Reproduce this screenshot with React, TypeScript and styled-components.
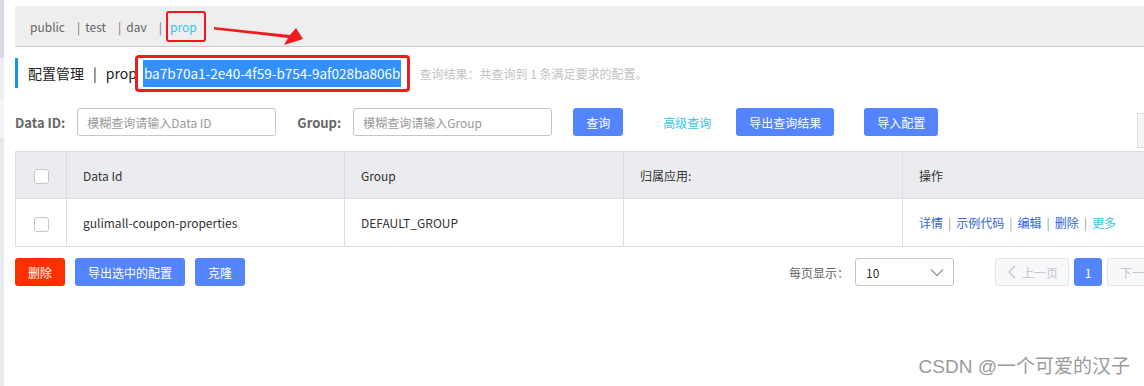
import { FC } from 'react';
import styled, { createGlobalStyle } from 'styled-components';

const GlobalStyle = createGlobalStyle`
  html, body {
    margin: 0;
    padding: 0;
    background: #fff;
    overflow: hidden;
  }
  body {
    font-family: "Noto Sans CJK SC", "Noto Sans", sans-serif;
    font-size: 12px;
    color: #333;
  }
`;

const Page = styled.div`
  position: relative;
  display: flex;
  width: 1144px;
  height: 386px;
  overflow: hidden;
`;

const Sidebar = styled.div`
  flex: none;
  width: 4px;
  display: flex;
  flex-direction: column;
`;

const SideBlock = styled.div<{ $tone: string; $h?: number }>`
  background: ${(p) => p.$tone};
  height: ${(p) => (p.$h ? `${p.$h}px` : 'auto')};
  flex: ${(p) => (p.$h ? 'none' : '1')};
`;

const Main = styled.div`
  flex: none;
  width: 1166px;
  padding: 6px 0 0 11px;
`;

const TabBar = styled.div`
  position: relative;
  height: 40px;
  display: flex;
  align-items: center;
  padding-left: 15px;
  background: #eeeeee;
  border-bottom: 1px solid #c9c9c9;
`;

const Tab = styled.span<{ $active?: boolean }>`
  color: ${(p) => (p.$active ? '#33c6e3' : '#666')};
  font-size: 12px;
`;

const TabSep = styled.span`
  color: #777;
  margin: 0 5px 0 12px;
`;

const ActiveBox = styled.span`
  box-sizing: border-box;
  height: 31px;
  display: inline-flex;
  align-items: center;
  padding: 0 7px 0 2px;
  border: 2px solid #f0181b;
  border-radius: 3px;
  margin-left: -1px;
`;

const Arrow = styled.svg`
  position: absolute;
  left: 199px;
  top: 19px;
`;

const TitleRow = styled.div`
  margin-top: 11px;
  height: 30px;
  display: flex;
  align-items: center;
  padding-left: 10px;
  border-left: 3px solid #1296db;
  font-size: 14px;
  color: #222;
`;

const TitleSep = styled.span`
  margin: 0 9px;
`;

const Marked = styled.span`
  display: inline-flex;
  margin-left: -2px;
  padding: 2px 6px 2px 5px;
  border: 3px solid #f01d1d;
  border-radius: 4px;
`;

const Selected = styled.span`
  background: #3390ff;
  color: #fff;
  line-height: 27px;
  padding: 0 1px;
  font-size: 13.5px;
`;

const ResultText = styled.span`
  margin-left: 9px;
  font-size: 12px;
  color: #c2c2c2;
`;

const SearchRow = styled.div`
  margin-top: 20px;
  height: 28px;
  display: flex;
  align-items: center;
`;

const FieldLabel = styled.label<{ $gap?: number }>`
  font-size: 13px;
  font-weight: 700;
  color: #666;
  margin-left: ${(p) => p.$gap ?? 0}px;
  margin-right: 12px;
`;

const TextInput = styled.input`
  box-sizing: border-box;
  width: 199px;
  height: 28px;
  padding: 0 9px;
  border: 1px solid #c4c6cf;
  border-radius: 3px;
  font-family: inherit;
  font-size: 12px;
  color: #333;
  outline: none;
  &::placeholder {
    color: #999;
  }
`;

const Button = styled.button<{ $gap?: number; $danger?: boolean }>`
  box-sizing: border-box;
  height: 28px;
  padding: 0 13px;
  margin-left: ${(p) => p.$gap ?? 0}px;
  border: none;
  border-radius: 3px;
  background: ${(p) => (p.$danger ? '#ff3000' : '#5584ff')};
  color: #fff;
  font-family: inherit;
  font-size: 12px;
  white-space: nowrap;
`;

const TextLink = styled.span<{ $gap?: number }>`
  margin-left: ${(p) => p.$gap ?? 0}px;
  color: #33c6e3;
  font-size: 12px;
`;

const EdgeBox = styled.div`
  align-self: flex-start;
  margin: 5px 0 0 auto;
  width: 44px;
  height: 35px;
  box-sizing: border-box;
  border: 1px solid #dcdcdc;
  background: #f5f5f5;
`;

const Table = styled.table`
  margin-top: 15px;
  width: 100%;
  border-collapse: collapse;
  table-layout: fixed;
`;

const HeadCell = styled.th<{ $center?: boolean }>`
  height: 46px;
  padding: 0 ${(p) => (p.$center ? 0 : 16)}px;
  background: #ebecf0;
  border: 1px solid #dcdee3;
  text-align: ${(p) => (p.$center ? 'center' : 'left')};
  font-weight: 400;
  font-size: 12px;
  color: #333;
`;

const Cell = styled.td<{ $center?: boolean }>`
  height: 47px;
  padding: 0 ${(p) => (p.$center ? 0 : 16)}px;
  border: 1px solid #dcdee3;
  text-align: ${(p) => (p.$center ? 'center' : 'left')};
  font-size: 12px;
  color: #333;
  white-space: nowrap;
`;

const Check = styled.span`
  display: inline-block;
  vertical-align: middle;
  box-sizing: border-box;
  width: 15px;
  height: 15px;
  border: 1px solid #c4c6cf;
  border-radius: 3px;
  background: #fff;
`;

const OpLink = styled.span<{ $more?: boolean }>`
  color: ${(p) => (p.$more ? '#33c6e3' : '#2f64d8')};
`;

const OpSep = styled.span`
  color: #999;
  margin: 0 5px;
`;

const FooterRow = styled.div`
  margin-top: 11px;
  height: 28px;
  display: flex;
  align-items: center;
`;

const PageSize = styled.div`
  margin-left: auto;
  display: flex;
  align-items: center;
  color: #666;
  font-size: 12px;
`;

const SelectBox = styled.div`
  box-sizing: border-box;
  width: 99px;
  height: 28px;
  margin-left: 6px;
  padding: 0 9px 0 10px;
  display: flex;
  align-items: center;
  justify-content: space-between;
  border: 1px solid #c4c6cf;
  border-radius: 3px;
  color: #333;
`;

const Pager = styled.div`
  margin-left: 41px;
  display: flex;
  gap: 5px;
`;

const PageButton = styled.div<{ $current?: boolean }>`
  box-sizing: border-box;
  height: 28px;
  min-width: 28px;
  padding: ${(p) => (p.$current ? '0' : '0 10px 0 12px')};
  display: flex;
  align-items: center;
  justify-content: center;
  gap: 6px;
  border-radius: 3px;
  border: 1px solid ${(p) => (p.$current ? '#5584ff' : '#e6e7eb')};
  background: ${(p) => (p.$current ? '#5584ff' : '#f7f8fa')};
  color: ${(p) => (p.$current ? '#fff' : '#c4c6cf')};
  font-size: 12px;
  white-space: nowrap;
`;

const Watermark = styled.div`
  position: absolute;
  right: 14px;
  bottom: 8px;
  font-family: "Liberation Sans", "Noto Sans CJK SC", sans-serif;
  font-size: 19px;
  color: #9a9a9a;
  text-shadow: 1px 1px 1px rgba(255, 255, 255, 0.8);
`;

const Chevron: FC<{ dir: 'down' | 'left' | 'right' }> = ({ dir }) => {
  const d = dir === 'down' ? 'M1 1.5 L7 7.5 L13 1.5' : dir === 'left' ? 'M7 1 L1 7 L7 13' : 'M1 1 L7 7 L1 13';
  const size = dir === 'down' ? { width: 14, height: 9 } : { width: 8, height: 14 };
  return (
    <svg {...size} viewBox={dir === 'down' ? '0 0 14 9' : '0 0 8 14'}>
      <path d={d} fill="none" stroke={dir === 'down' ? '#999' : '#c4c6cf'} strokeWidth="1.3" />
    </svg>
  );
};

const tabs = ['public', 'test', 'dav'];
const ops = ['详情', '示例代码', '编辑', '删除'];

const App: FC = () => {
  return (
    <Page>
      <GlobalStyle />
      <Sidebar>
        <SideBlock $tone="#d7dbe3" $h={58} />
        <SideBlock $tone="#eceef2" $h={40} />
        <SideBlock $tone="#f3f4f7" $h={40} />
        <SideBlock $tone="#e7eaef" />
      </Sidebar>
      <Main>
        <TabBar>
          {tabs.map((t, i) => (
            <span key={t}>
              {i > 0 && <TabSep>|</TabSep>}
              <Tab>{t}</Tab>
            </span>
          ))}
          <TabSep>|</TabSep>
          <ActiveBox>
            <Tab $active>prop</Tab>
          </ActiveBox>
          <Arrow width="92" height="24" viewBox="0 0 92 24">
            <polygon points="0,2 76,10 82,3 89,14 70,20 74,13 0,4.5" fill="#ee1c1c" />
          </Arrow>
        </TabBar>

        <TitleRow>
          配置管理<TitleSep>|</TitleSep>prop
          <Marked>
            <Selected>ba7b70a1-2e40-4f59-b754-9af028ba806b</Selected>
          </Marked>
          <ResultText>查询结果：共查询到 1 条满足要求的配置。</ResultText>
        </TitleRow>

        <SearchRow>
          <FieldLabel>Data ID:</FieldLabel>
          <TextInput placeholder="模糊查询请输入Data ID" />
          <FieldLabel $gap={21}>Group:</FieldLabel>
          <TextInput placeholder="模糊查询请输入Group" />
          <Button $gap={21}>查询</Button>
          <TextLink $gap={40}>高级查询</TextLink>
          <Button $gap={25}>导出查询结果</Button>
          <Button $gap={30}>导入配置</Button>
          <EdgeBox />
        </SearchRow>

        <Table>
          <colgroup>
            <col style={{ width: 51 }} />
            <col style={{ width: 278 }} />
            <col style={{ width: 279 }} />
            <col style={{ width: 279 }} />
            <col />
          </colgroup>
          <thead>
            <tr>
              <HeadCell $center>
                <Check />
              </HeadCell>
              <HeadCell>Data Id</HeadCell>
              <HeadCell>Group</HeadCell>
              <HeadCell>归属应用:</HeadCell>
              <HeadCell>操作</HeadCell>
            </tr>
          </thead>
          <tbody>
            <tr>
              <Cell $center>
                <Check />
              </Cell>
              <Cell>gulimall-coupon-properties</Cell>
              <Cell>DEFAULT_GROUP</Cell>
              <Cell />
              <Cell>
                {ops.map((op) => (
                  <span key={op}>
                    <OpLink>{op}</OpLink>
                    <OpSep>|</OpSep>
                  </span>
                ))}
                <OpLink $more>更多</OpLink>
              </Cell>
            </tr>
          </tbody>
        </Table>

        <FooterRow>
          <Button $danger>删除</Button>
          <Button $gap={10}>导出选中的配置</Button>
          <Button $gap={10}>克隆</Button>
          <PageSize>
            每页显示：
            <SelectBox>
              10
              <Chevron dir="down" />
            </SelectBox>
          </PageSize>
          <Pager>
            <PageButton>
              <Chevron dir="left" />
              上一页
            </PageButton>
            <PageButton $current>1</PageButton>
            <PageButton>
              下一页
              <Chevron dir="right" />
            </PageButton>
          </Pager>
        </FooterRow>
      </Main>
      <Watermark>CSDN @一个可爱的汉子</Watermark>
    </Page>
  );
};

export default App;
